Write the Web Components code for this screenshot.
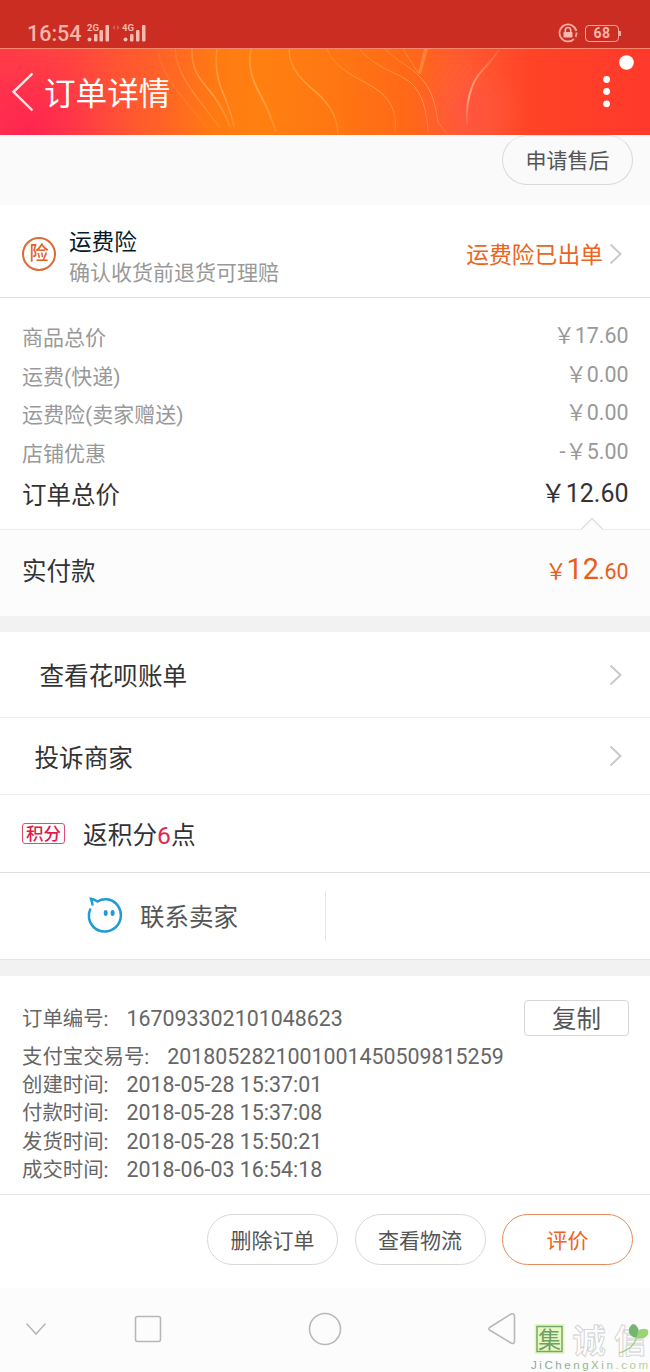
<!DOCTYPE html>
<html lang="zh-CN">
<head>
<meta charset="utf-8">
<title>订单详情</title>
<style>
html,body{margin:0;padding:0}
body{width:650px;height:1372px;overflow:hidden;background:#fff;font-family:Roboto,"Noto Sans CJK SC",sans-serif;color:#333}
</style>
</head>
<body>
<order-page></order-page>
<script>
const define = (name, css, html) => customElements.define(name, class extends HTMLElement {
  constructor() {
    super();
    const t = document.createElement('template');
    t.innerHTML = `<style>*{box-sizing:border-box}svg{display:block;flex:none}${css}</style>${html}`;
    this.attachShadow({mode: 'open'}).append(t.content.cloneNode(true));
  }
});

define('status-bar', `
:host{display:flex;height:48px;background:#cb2d22;color:#f6b5aa;padding:19px 29px 0 27px;align-items:center;justify-content:space-between}
.l,.r{display:flex;align-items:center;height:29px}
.time{font-size:21.5px;line-height:29px;font-weight:500}
.sig{margin:0 0 0 5px}.r{gap:7px;padding-bottom:1px}
.bat{display:flex;align-items:center}
.cell{width:34px;height:17px;border:1.5px solid #f6a79d;border-radius:4px;font-size:14px;line-height:15px;font-weight:700;text-align:center;letter-spacing:.5px}
.tip{width:2px;height:5px;background:#f6a79d}
text{font:bold 9.500px Roboto,sans-serif;fill:#f8b9af}
`, `
<div class="l"><span class="time">16:54</span>
<svg class="sig" width="62" height="22" viewBox="0 0 62 22"><g fill="#f8b9af"><circle cx="2.5" cy="16.500" r="2"/><rect x="7" y="11" width="3.500" height="7.500" rx="1"/><rect x="12.500" y="7" width="3.500" height="11.500" rx="1"/><rect x="18.500" y="2" width="3.500" height="16.500" rx="1"/><circle cx="38.500" cy="16.500" r="2"/><rect x="43" y="11" width="3.500" height="7.500" rx="1"/><rect x="49" y="7" width="3.500" height="11.500" rx="1"/><rect x="55" y="2" width="3.500" height="16.500" rx="1"/></g><text x="0" y="8">2G</text><text x="35" y="8">4G</text><path d="M25.500 4.500l2.500-2.500v5zM32.500 4.500l-2.500-2.500v5z" fill="#d86055"/></svg></div>
<div class="r"><svg width="20" height="20" viewBox="0 0 20 20"><path d="M18.300 8A8.500 8.500 0 1 0 16 16M18.500 9.500A8.500 8.500 0 0 1 17.500 14" fill="none" stroke="#f6a79d" stroke-width="1.800"/><rect x="5.500" y="9" width="9" height="5.500" rx=".8" fill="#f8b9af"/><path d="M7.300 9V7.200a2.700 2.700 0 0 1 5.400 0V9" fill="none" stroke="#f8b9af" stroke-width="1.600"/></svg>
<div class="bat"><div class="cell">68</div><div class="tip"></div></div></div>`);

define('title-bar', `
:host{display:grid;height:87px;color:#fff}
.bg,.row{grid-area:1/1}
.row{display:flex;align-items:center;padding:0 15px 0 10px}
h1{font-size:31.6px;font-weight:400;line-height:44px;margin:0 0 0 9px;flex:1;padding-top:6px}
`, `
<svg class="bg" width="650" height="87" viewBox="0 0 650 87">
<defs><linearGradient id="a"><stop offset="0" stop-color="#ff3a4b"/><stop offset=".1" stop-color="#ff4540"/><stop offset=".24" stop-color="#ff6029"/><stop offset=".33" stop-color="#ff7a12"/><stop offset=".4" stop-color="#ff8010"/><stop offset=".52" stop-color="#ff7612"/><stop offset=".63" stop-color="#ff6818"/><stop offset=".71" stop-color="#ff5a30"/><stop offset=".82" stop-color="#ff4326"/><stop offset="1" stop-color="#ff392b"/></linearGradient>
<radialGradient id="p" cx="28" cy="82" r="110" gradientUnits="userSpaceOnUse"><stop offset="0" stop-color="#ff2450"/><stop offset=".4" stop-color="#ff2d4d" stop-opacity=".7"/><stop offset="1" stop-color="#ff4540" stop-opacity="0"/></radialGradient>
<radialGradient id="q" cx="470" cy="62" r="55" gradientUnits="userSpaceOnUse"><stop offset="0" stop-color="#ff5448" stop-opacity=".7"/><stop offset="1" stop-color="#ff5f45" stop-opacity="0"/></radialGradient>
<linearGradient id="w" gradientUnits="userSpaceOnUse" x1="0" x2="0" y1="0" y2="87"><stop offset="0" stop-color="#ffb860" stop-opacity=".3"/><stop offset=".5" stop-color="#ffbd70" stop-opacity=".6"/><stop offset="1" stop-color="#ffb060" stop-opacity=".25"/></linearGradient>
<linearGradient id="v" gradientUnits="userSpaceOnUse" x1="0" x2="0" y1="0" y2="80"><stop offset="0" stop-color="#ffa070" stop-opacity=".2"/><stop offset=".6" stop-color="#ffb28f" stop-opacity=".9"/><stop offset="1" stop-color="#ff9060" stop-opacity=".15"/></linearGradient></defs>
<rect width="650" height="87" fill="url(#a)"/><rect width="650" height="87" fill="url(#p)"/><rect width="650" height="87" fill="url(#q)"/>
<g fill="none" stroke="url(#w)" stroke-width="1.500">
<path d="M158 1C160 26 184 52 208 80" opacity=".3"/><path d="M175 1C177 30 200 52 220 80" opacity=".6"/>
<path d="M192 1C191 26 205 36 213 47C221 58 226 68 230 79"/><path d="M217 1C214 24 220 38 225 50C229 60 232 68 234 79"/><path d="M251 1C247 22 254 35 262 50C269 63 272 72 276 84" stroke-width="1.800"/><path d="M289 1C289 22 304 34 317 45C330 57 337 68 338 86"/><path d="M327 1C334 20 356 29 373 39C391 50 397 64 395 85" stroke-width="1"/><path d="M360 2C376 20 398 25 410 34C423 45 427 64 428 85" stroke-width="1"/><path d="M385 1C398 14 411 19 418 27C430 38 435 52 438 74L447 86" stroke-width="1"/><path d="M403 1L419 26" stroke-width="1"/>
</g>
<path d="M424 1H428L421 26L418 25Z" fill="#ffa85c" opacity=".45"/>
<path d="M499 2C487 20 477 24 472 39C467 52 466 62 467 77" fill="none" stroke="url(#v)" stroke-width="2"/>
<g fill="none" stroke="#ff9a60" stroke-opacity=".13" stroke-width=".7"><path d="M426 33L440 14M430 40L449 12M433 47L457 10M436 53L464 10M438 59L470 12M440 65L472 18M443 70L472 26"/></g>
<path d="M0 .500H650" stroke="#f4866b"/>
</svg>
<div class="row"><svg width="25" height="44" viewBox="0 0 25 44"><path d="M22.500 3.500L3.500 21.800L22.500 40.500" fill="none" stroke="#ffece7" stroke-width="2.400"/></svg><h1>订单详情</h1>
<svg width="45" height="87" viewBox="0 0 45 87"><g fill="#fff"><circle cx="36.500" cy="14.500" r="7.300"/><circle cx="16.600" cy="31.500" r="3.400"/><circle cx="16.600" cy="43.500" r="3.400"/><circle cx="16.600" cy="55.800" r="3.400"/></g></svg></div>`);

define('pill-button', `
:host{display:flex;align-items:center;justify-content:center;width:131px;height:51px;border:1px solid #d8d8d8;border-radius:26px;font-size:21px;line-height:30px;color:#555;padding-top:2px;box-sizing:border-box}
:host([accent]){color:#ee6320;border-color:#e58a5c}
`, `<slot></slot>`);

define('arrow-right', `:host{display:block}`, `<svg width="14" height="22" viewBox="0 0 14 22"><path d="M1.500 1.500L11.500 11L1.500 20.500" fill="none" stroke="#cacaca" stroke-width="2"/></svg>`);

define('insurance-row', `
:host{display:flex;align-items:center;height:93px;border-bottom:1px solid #dedede;padding:0 27px 0 22px;background:#fff}
.badge{width:34px;height:34px;border:2px solid #de6a38;border-radius:50%;color:#e0622c;font-size:19px;font-weight:500;line-height:30px;text-align:center;margin-top:6px}
.t{flex:1;margin-left:13px;padding-top:12px}
.a{font-size:22.600px;line-height:31px;color:#051b28}.b{font-size:21px;line-height:30px;color:#999}
.s{font-size:22.800px;color:#ec6420;margin-right:6px;padding-top:10px;line-height:32px}
arrow-right{margin-top:5px}
`, `<div class="badge">险</div><div class="t"><div class="a">运费险</div><div class="b">确认收货前退货可理赔</div></div><div class="s">运费险已出单</div><arrow-right></arrow-right>`);

define('price-line', `
:host{display:flex;justify-content:space-between;height:38.500px;line-height:38px;font-size:21px;color:#999}
.v{margin-top:-2px;font-size:21.400px}
:host([total]){font-size:24.500px;color:#333;height:42px;line-height:45px}
:host([total]) .v{font-size:25px}
`, `<span><slot name="k"></slot></span><span class="v"><slot></slot></span>`);

define('price-panel', `
:host{display:block;height:232px;background:#fff;padding:21px 21.500px 0 22px;position:relative;border-bottom:1px solid #ededed}
svg{position:absolute;right:46px;bottom:-1px}
`, `<price-line><span slot="k">商品总价</span>￥17.60</price-line><price-line><span slot="k">运费(快递)</span>￥0.00</price-line><price-line><span slot="k">运费险(卖家赠送)</span>￥0.00</price-line><price-line><span slot="k">店铺优惠</span>-￥5.00</price-line><price-line total><span slot="k">订单总价</span>￥12.60</price-line>
<svg width="24" height="13" viewBox="0 0 24 13"><path d="M1 12.500L12 1.500L23 12.500V13H1Z" fill="#fcfcfc"/><path d="M1 12.500L12 1.500L23 12.500" fill="none" stroke="#dedede" stroke-width="1.300"/></svg>`);

define('paid-row', `
:host{display:flex;height:86px;background:#fcfcfc;align-items:center;justify-content:space-between;padding:0 21.500px 3px 22px;font-size:24.500px;line-height:36px;color:#333}
.m{color:#e95d1c;font-size:21.400px;margin-top:-2px}.m b{font-weight:400;font-size:28.700px}
`, `<span>实付款</span><span class="m">￥<b>12</b>.60</span>`);

define('section-gap', `:host{display:block;height:16px;background:#f2f2f2}`, ``);

define('link-row', `
:host{display:flex;align-items:center;justify-content:space-between;box-sizing:border-box;background:#fff;border-bottom:1px solid #ececec;padding:0 27px 0 34.500px;font-size:24.600px;line-height:36px;color:#333}
span{padding-top:5px}
`, `<span><slot></slot></span><arrow-right></arrow-right>`);

define('points-row', `
:host{display:flex;align-items:center;height:78px;border-bottom:1px solid #dedede;padding-left:22px;font-size:24.700px;line-height:36px;background:#fff}
.tag{width:43px;height:21px;border:1px solid #d94f72;border-radius:3px;color:#df1a4a;font-size:17.500px;line-height:20px;text-align:center;font-weight:500;margin-right:18px}
i{font-style:normal;color:#df2850}.x{padding-top:5px}
`, `<div class="tag">积分</div><div class="x">返积分<i>6</i>点</div>`);

define('contact-row', `
:host{display:flex;align-items:center;height:86px;background:#fff;font-size:24.500px;line-height:36px;color:#555}
.c{width:326px;height:50px;border-right:1px solid #e6e6e6;display:flex;align-items:center;padding-left:86px}
span{margin-left:17px;padding-top:4px}
svg{margin-top:-2px}
`, `<div class="c"><svg width="37" height="38" viewBox="0 0 37 38"><path d="M6.500 9.500C6.500 7 5.800 5 5 2.800C7.500 3 9.500 4.300 11.500 5.500C17 2 25 2.500 30 7.500C36.500 14 36.500 24.500 30 31C23.500 37 13.500 37 7.500 31C2.500 26 1.500 18.500 4.500 12.500" fill="none" stroke="#219bd8" stroke-width="2.500"/><ellipse cx="19.700" cy="17" rx="2" ry="3" fill="#219bd8"/><ellipse cx="26.600" cy="17" rx="2" ry="3" fill="#219bd8"/></svg><span>联系卖家</span></div>`);

define('info-line', `
:host{display:flex;height:28.200px;line-height:28px;color:#666;font-size:21.380px;box-sizing:border-box}
.k{font-size:20.400px;margin-right:18px}
`, `<span class="k"><slot name="k"></slot>:</span><span><slot></slot></span>`);

define('order-info', `
:host{display:block;height:219px;background:#fff;border-bottom:1px solid #e4e4e4;padding:24px 21px 0 22px}
.top{display:flex;align-items:flex-start;justify-content:space-between;height:43px}
.top info-line{margin-top:5px}
.copy{width:105px;height:36px;border:1px solid #d6d6d6;border-radius:4px;text-align:center;font-size:24.500px;line-height:37px;color:#555}
`, `<div class="top"><info-line><span slot="k">订单编号</span>167093302101048623</info-line><div class="copy">复制</div></div>
<info-line><span slot="k">支付宝交易号</span>2018052821001001450509815259</info-line><info-line><span slot="k">创建时间</span>2018-05-28 15:37:01</info-line><info-line><span slot="k">付款时间</span>2018-05-28 15:37:08</info-line><info-line><span slot="k">发货时间</span>2018-05-28 15:50:21</info-line><info-line><span slot="k">成交时间</span>2018-06-03 16:54:18</info-line>`);

define('action-bar', `:host{display:flex;height:93px;background:#fff;justify-content:flex-end;gap:16.500px;padding:19px 17px 0}`,
`<pill-button>删除订单</pill-button><pill-button>查看物流</pill-button><pill-button accent>评价</pill-button>`);

define('site-mark', `:host{display:block}.a{font:400 23px "Noto Sans CJK SC",sans-serif}.b{font:700 33px "Noto Sans CJK SC",sans-serif}.c{font:400 11.500px "Liberation Sans",sans-serif}`,
`<svg width="120" height="54" viewBox="0 0 120 54"><defs><linearGradient id="g"><stop offset="0" stop-color="#8aa39f"/><stop offset=".5" stop-color="#8eb889"/><stop offset="1" stop-color="#bfd39a"/></linearGradient></defs>
<rect x="4.500" y="6" width="30" height="30" fill="#e5f8bd"/><rect x="7" y="8.500" width="25" height="25" fill="none" stroke="#78a673" stroke-width="1.500"/>
<text class="a" x="8" y="30" fill="#6f9f6a">集</text>
<g class="b" fill="#fdfdfd" stroke="#cfcfcf" stroke-width=".8"><text x="42.500" y="35">诚</text><text x="84" y="35">信</text></g>
<path d="M107 20C98 19 96 10 103 6C109 8 110 14 107 20Z" fill="#74b671"/><path d="M107 20C107 12 112 9 118 12C120 18 114 22 107 20Z" fill="#9bd475"/><path d="M107 19C104 27 101 31 89 35" fill="none" stroke="#a9cf88" stroke-width="1.300"/>
<text class="c" x="1" y="51" fill="url(#g)" textLength="117">JiChengXin.com</text></svg>`);

define('nav-bar', `
:host{display:grid;height:84px;background:#fcfcfc}
.n,.m{grid-area:1/1}
.m{justify-self:end;align-self:end;z-index:1}
`, `<svg class="n" width="650" height="84" viewBox="0 1 650 84"><g fill="none" stroke="#b8b8b8" stroke-width="1.600"><path d="M26.500 36.500L36 47L45.500 36.500"/><rect x="135.500" y="29.500" width="25" height="25" rx="2"/><circle cx="325" cy="42" r="15.500"/><path d="M489.500 40.500L511 27Q514.500 26 514.500 29.500V54Q514.500 57.500 511 56L489.500 43Q488 41.800 489.500 40.500Z"/></g></svg><site-mark class="m"></site-mark>`);

define('order-page', `
:host{display:flex;flex-direction:column;width:650px;height:1372px;overflow:hidden}
:host>*{flex:none}
.after{display:flex;justify-content:flex-end;height:70px;background:#fafafa;padding-right:17px}
.after pill-button{height:50px;border-top-color:#e5e5e5}
.r1{height:86px}.r1{padding-left:39.500px}.r2{height:77px}
.g2{height:17px;border-top:1px solid #e4e4e4;box-sizing:border-box}
`, `<status-bar></status-bar><title-bar></title-bar><div class="after"><pill-button>申请售后</pill-button></div><insurance-row></insurance-row><price-panel></price-panel><paid-row></paid-row><section-gap></section-gap><link-row class="r1">查看花呗账单</link-row><link-row class="r2">投诉商家</link-row><points-row></points-row><contact-row></contact-row><section-gap class="g2"></section-gap><order-info></order-info><action-bar></action-bar><nav-bar></nav-bar>`);
</script>
</body>
</html>
